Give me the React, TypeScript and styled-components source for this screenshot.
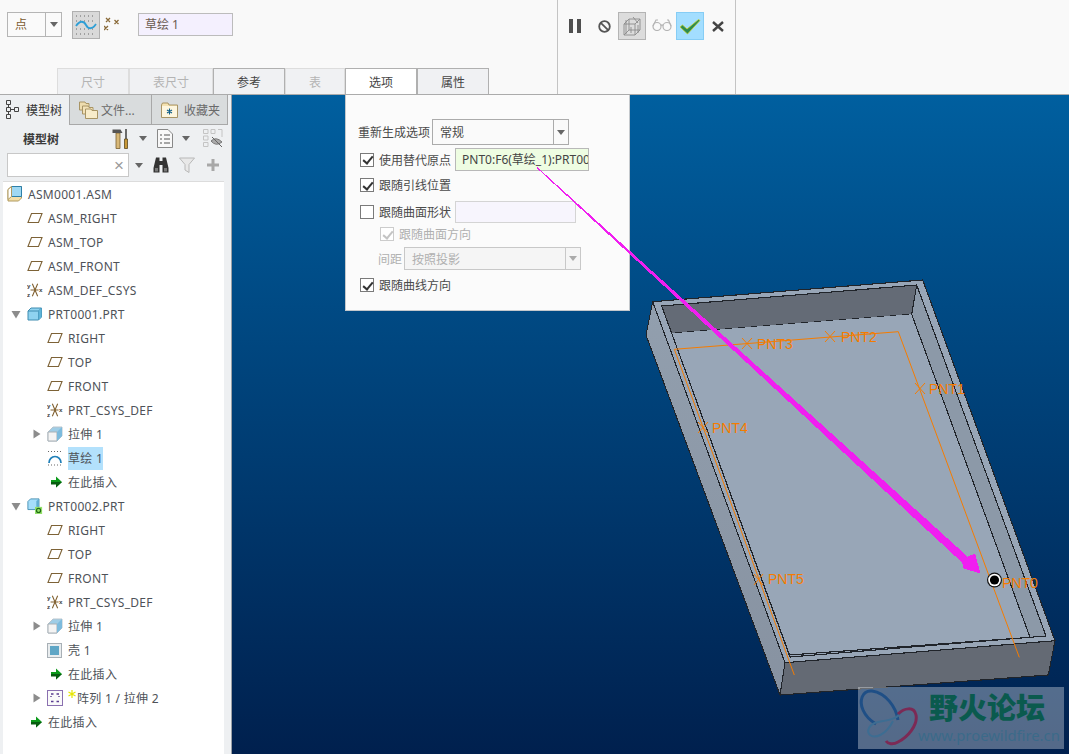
import { FunctionComponent } from "react";
import styled, { createGlobalStyle } from "styled-components";

const FONT = `"Noto Sans", "Noto Sans CJK SC", sans-serif`;

type IconKind =
  | "asm"
  | "plane"
  | "csys"
  | "part"
  | "partNew"
  | "extrude"
  | "sketch"
  | "insert"
  | "shell"
  | "pattern";

interface TreeNode {
  label: string;
  icon: IconKind;
  depth: number;
  caret?: "down" | "right";
  selected?: boolean;
  star?: boolean;
}

const treeData: TreeNode[] = [
  { label: "ASM0001.ASM", icon: "asm", depth: 0 },
  { label: "ASM_RIGHT", icon: "plane", depth: 1 },
  { label: "ASM_TOP", icon: "plane", depth: 1 },
  { label: "ASM_FRONT", icon: "plane", depth: 1 },
  { label: "ASM_DEF_CSYS", icon: "csys", depth: 1 },
  { label: "PRT0001.PRT", icon: "part", depth: 1, caret: "down" },
  { label: "RIGHT", icon: "plane", depth: 2 },
  { label: "TOP", icon: "plane", depth: 2 },
  { label: "FRONT", icon: "plane", depth: 2 },
  { label: "PRT_CSYS_DEF", icon: "csys", depth: 2 },
  { label: "拉伸 1", icon: "extrude", depth: 2, caret: "right" },
  { label: "草绘 1", icon: "sketch", depth: 2, selected: true },
  { label: "在此插入", icon: "insert", depth: 2 },
  { label: "PRT0002.PRT", icon: "partNew", depth: 1, caret: "down" },
  { label: "RIGHT", icon: "plane", depth: 2 },
  { label: "TOP", icon: "plane", depth: 2 },
  { label: "FRONT", icon: "plane", depth: 2 },
  { label: "PRT_CSYS_DEF", icon: "csys", depth: 2 },
  { label: "拉伸 1", icon: "extrude", depth: 2, caret: "right" },
  { label: "壳 1", icon: "shell", depth: 2 },
  { label: "在此插入", icon: "insert", depth: 2 },
  { label: "阵列 1 / 拉伸 2", icon: "pattern", depth: 2, caret: "right", star: true },
  { label: "在此插入", icon: "insert", depth: 1 },
];

const dashTabs = [
  { label: "尺寸", width: 72, disabled: true },
  { label: "表尺寸", width: 84, disabled: true },
  { label: "参考", width: 72 },
  { label: "表", width: 60, disabled: true },
  { label: "选项", width: 72, active: true },
  { label: "属性", width: 72 },
];

const TreeIcon: FunctionComponent<{ kind: IconKind }> = ({ kind }) => {
  switch (kind) {
    case "asm":
      return (
        <svg width="16" height="18" viewBox="0 0 16 18">
          <path d="M1 4.5 L4.5 1.5 H14.5 V13 L11.5 16 H1 Z" fill="#f3dfa8" stroke="#b09a60" />
          <path d="M4.5 1.5 H14.5 V11.5 H4.5 Z" fill="#9fd8f2" stroke="#2d7fa8" />
          <path d="M1 4.5 L4.5 1.5 V11.5 L1 14.5 Z" fill="#ffffff" stroke="#b09a60" />
        </svg>
      );
    case "plane":
      return (
        <svg width="16" height="12" viewBox="0 0 16 12">
          <path d="M4.5 1.5 H15 L11.5 10.5 H1 Z" fill="none" stroke="#7d6236" strokeWidth="1.1" />
        </svg>
      );
    case "csys":
      return (
        <svg width="18" height="18" viewBox="0 0 18 18">
          <path d="M6 2 L12 16 M12 2 L6 16 M9 9 L4 9 M9 9 L13 9" stroke="#80602f" strokeWidth="1.2" fill="none" />
          <text x="0" y="6.5" fontSize="7" fontWeight="700" fill="#3c3c3c" fontFamily="Liberation Sans">y</text>
          <text x="0" y="17" fontSize="7" fontWeight="700" fill="#3c3c3c" fontFamily="Liberation Sans">z</text>
          <text x="13.5" y="11.5" fontSize="7" fontWeight="700" fill="#3c3c3c" fontFamily="Liberation Sans">x</text>
        </svg>
      );
    case "part":
      return (
        <svg width="16" height="14" viewBox="0 0 16 14">
          <path d="M1 4 L4 1 H14.5 V10 L11.5 13 H1 Z" fill="#8fd3f0" stroke="#3f8cb0" />
          <path d="M1 4 H11.5 L14.5 1 M11.5 4 V13" fill="none" stroke="#3f8cb0" />
          <path d="M11.5 4 L14.5 1 V10 L11.5 13 Z" fill="#5fb4d8" />
        </svg>
      );
    case "partNew":
      return (
        <svg width="18" height="18" viewBox="0 0 18 18">
          <path d="M1 4 L4 1 H13.5 V11 L10.5 13 H1 Z" fill="#a6defa" stroke="#3f8cb0" />
          <path d="M10.5 3.5 L13.5 1 V11 L10.5 13 Z" fill="#62aed2" />
          <rect x="9" y="10" width="8" height="8" fill="#93e06a" />
          <circle cx="13" cy="14" r="2.3" fill="none" stroke="#226a14" strokeWidth="1.3" />
        </svg>
      );
    case "extrude":
      return (
        <svg width="16" height="16" viewBox="0 0 16 16">
          <path d="M1 6 L6 1 H15 V10 L10 15 H1 Z" fill="#9fcde6" stroke="#b8c4cc" />
          <path d="M1 6 H10 V15 H1 Z" fill="#f4f4f4" stroke="#a8b0b6" />
          <path d="M10 6 L15 1 V10 L10 15 Z" fill="#7dbbdd" />
        </svg>
      );
    case "sketch":
      return (
        <svg width="16" height="16" viewBox="0 0 16 16">
          <path d="M2 13 A6 6.5 0 0 1 14 13" fill="none" stroke="#1f7fb8" strokeWidth="1.7" />
          <path d="M1 1.5 H15 M1 15 H15" stroke="#666" strokeDasharray="1 2" fill="none" />
        </svg>
      );
    case "insert":
      return (
        <svg width="16" height="14" viewBox="0 0 16 14">
          <path d="M4 5 H9 V1.5 L15 7 L9 12.5 V9 H4 Z" fill="#0c9a1a" />
          <path d="M4 7 H15 L9 12.5 V9.5 H4 Z" fill="#075c10" />
        </svg>
      );
    case "shell":
      return (
        <svg width="16" height="16" viewBox="0 0 16 16">
          <rect x="0.5" y="1.5" width="14" height="14" fill="#e9edef" stroke="#a8b0b6" />
          <rect x="3" y="4" width="9" height="9" fill="#5fa6c6" />
        </svg>
      );
    case "pattern":
      return (
        <svg width="16" height="16" viewBox="0 0 16 16">
          <rect x="0.5" y="0.5" width="15" height="15" fill="#fafafa" stroke="#8a70b0" />
          <path d="M4 4 H6.5 M9.5 4 H12 M4 11.5 H6.5 M9.5 11.5 H12 M4 6 V7 M12 6 V7" stroke="#5a3c90" strokeWidth="1.4" />
        </svg>
      );
  }
};

const Caret: FunctionComponent<{ dir: "down" | "right" }> = ({ dir }) => (
  <CaretBox>
    <svg width="10" height="10" viewBox="0 0 10 10">
      {dir === "down" ? (
        <path d="M0.5 2 H9.5 L5 9.5 Z" fill="#8c8c8c" />
      ) : (
        <path d="M2.5 0.5 L9.5 5 L2.5 9.5 Z" fill="#8c8c8c" />
      )}
    </svg>
  </CaretBox>
);

const SmallDrop = ({ color = "#666" }: { color?: string }) => (
  <svg width="8" height="5" viewBox="0 0 8 5">
    <path d="M0 0 H8 L4 5 Z" fill={color} />
  </svg>
);

const FolderIcon = ({ star }: { star?: boolean }) =>
  star ? (
    <svg width="17" height="16" viewBox="0 0 17 16">
      <path d="M0.5 3 L1.5 1 H7 L8 3 H16.5 V15.5 H0.5 Z" fill="#f5e2b0" stroke="#a89464" />
      <rect x="1" y="4" width="15" height="11" fill="#fdf6df" />
      <path d="M8.5 6.5 V12.5 M6 8 L11 11 M11 8 L6 11" stroke="#0f5f8a" strokeWidth="1.1" />
    </svg>
  ) : (
    <svg width="20" height="19" viewBox="0 0 20 19">
      <path d="M0.5 2 H6 L7 3.5 H10 V10 H0.5 Z" fill="#eedcae" stroke="#a89464" />
      <path d="M3.5 6 H9 L10 7.5 H14 V14 H3.5 Z" fill="#f3e2b8" stroke="#a89464" />
      <path d="M6.5 9 H12 L13 10.5 H18.5 V18.5 H6.5 Z" fill="#f8ecca" stroke="#a89464" />
    </svg>
  );

const App: FunctionComponent = () => {
  return (
    <>
      <GlobalStyle />
      <Page>
        <Ribbon>
          <DashLeft>
            <ControlRow>
              <DropSelect>
                <DropValue>点</DropValue>
                <DropButton>
                  <SmallDrop />
                </DropButton>
              </DropSelect>
              <ToggleButton>
                <svg width="24" height="24" viewBox="0 0 24 24">
                  <path d="M2 3 H22 M2 8 H22 M2 16 H22 M2 21 H22" stroke="#666" strokeDasharray="1 3" fill="none" />
                  <path d="M2 13 C6 7 10 8 12 12 C14 16 18 17 22 11" stroke="#2f9fd6" strokeWidth="1.8" fill="none" />
                </svg>
              </ToggleButton>
              <PointsIcon>
                <svg width="16" height="16" viewBox="0 0 16 16" fill="none" stroke="#8a6a38" strokeWidth="1.3">
                  <path d="M2 1 L6 5 M6 1 L2 5 M10.5 3 L14.5 7 M14.5 3 L10.5 7 M0 9 L4 13 M4 9 L0 13" />
                </svg>
              </PointsIcon>
              <NameField>草绘 1</NameField>
            </ControlRow>
            <DashTabs>
              {dashTabs.map((t) => (
                <DashTab key={t.label} $width={t.width} $active={t.active} $disabled={t.disabled}>
                  {t.label}
                </DashTab>
              ))}
            </DashTabs>
          </DashLeft>
          <DashRight>
            <svg width="12" height="14" viewBox="0 0 12 14">
              <path d="M0 0 H4 V14 H0 Z M8 0 H12 V14 H8 Z" fill="#4f4f4f" />
            </svg>
            <StopIcon>
              <svg width="13" height="13" viewBox="0 0 13 13" fill="none" stroke="#555" strokeWidth="1.8">
                <circle cx="6.5" cy="6.5" r="5.3" />
                <path d="M2.8 2.8 L10.2 10.2" />
              </svg>
            </StopIcon>
            <ActionButton>
              <svg width="20" height="20" viewBox="0 0 20 20" fill="none" stroke="#8a8a8a" strokeWidth="0.9">
                <path d="M2 8 L7 3 H18 V14 L13 19 H2 Z M2 8 H13 L18 3 M13 8 V19 M7 3 V14 M2 19 L7 14 H18 M4 4 V18 M11 1 L16 7 M9 11 V17 M16 9 V17" />
              </svg>
            </ActionButton>
            <GlassesIcon>
              <svg width="20" height="12" viewBox="0 0 20 12" fill="none" stroke="#b4b4b4" strokeWidth="1.2">
                <circle cx="5" cy="7.5" r="4" />
                <circle cx="15" cy="7.5" r="4" />
                <path d="M9 6.5 Q10 5.5 11 6.5 M1 7 L4 1 H6 M19 7 L16.5 1 H15" />
              </svg>
            </GlassesIcon>
            <ConfirmButton>
              <svg width="22" height="17" viewBox="0 0 22 17">
                <path d="M1 9 L3.5 7 L8 11 L19.5 1.5 L21 2.5 L8.5 16 Z" fill="#2d8b4e" stroke="#c7cf2e" strokeWidth="0.8" />
              </svg>
            </ConfirmButton>
            <CancelIcon>
              <svg width="12" height="11" viewBox="0 0 12 11" fill="none" stroke="#444" strokeWidth="2.4">
                <path d="M1 1 L11 10 M11 1 L1 10" />
              </svg>
            </CancelIcon>
          </DashRight>
        </Ribbon>
        <Body>
          <Sidebar>
            <SideTabs>
              <SideTab $width={70} $active $pad={6} $gap={7}>
                <svg width="13" height="20" viewBox="0 0 13 20" fill="none" stroke="#444">
                  <path d="M0.5 0.5 H4.5 V4.5 H0.5 Z M0.5 7.5 H4.5 V11.5 H0.5 Z M0.5 14.5 H4.5 V18.5 H0.5 Z M8.5 7.5 H12.5 V11.5 H8.5 Z M4.5 9.5 H8.5 M2.5 4.5 V7.5 M2.5 11.5 V14.5" />
                </svg>
                模型树
              </SideTab>
              <SideTab $width={82} $pad={9} $gap={2}>
                <FolderIcon />
                文件...
              </SideTab>
              <SideTab $width={76} $pad={9} $gap={6}>
                <FolderIcon star />
                收藏夹
              </SideTab>
            </SideTabs>
            <ToolRow>
              <ToolTitle>模型树</ToolTitle>
              <svg width="17" height="20" viewBox="0 0 17 20">
                <path d="M4 4 H8 V19.5 H4 Z" fill="#d8b878" stroke="#7a6030" strokeWidth="0.8" />
                <path d="M0.5 0.5 H8.5 L10.5 4 H0.5 Z" fill="#555" />
                <path d="M14 0 V10" stroke="#333" strokeWidth="1.4" />
                <path d="M12.5 10 H15.5 V19.5 H12.5 Z" fill="#c89838" stroke="#5c4a20" strokeWidth="0.8" />
              </svg>
              <DropSlot $left={10}>
                <SmallDrop />
              </DropSlot>
              <DocIcon>
                <svg width="16" height="19" viewBox="0 0 16 19">
                  <path d="M0.5 0.5 H11 L15.5 5 V18.5 H0.5 Z" fill="#f8f8f8" stroke="#888" />
                  <path d="M3 6 H5 M7 6 H13 M3 10 H5 M7 10 H13 M3 14 H5 M7 14 H13" stroke="#555" />
                </svg>
              </DocIcon>
              <DropSlot $left={9}>
                <SmallDrop />
              </DropSlot>
              <EyeIcon>
                <svg width="20" height="19" viewBox="0 0 20 19" fill="none" stroke="#c4c4c4">
                  <path d="M0.5 0.5 H5 V4.5 H0.5 Z M0.5 7 H5 V11 H0.5 Z M0.5 13.5 H5 V17.5 H0.5 Z M8 0.5 H12 V4.5 H8 Z M15 0.5 H19 M19 0.5 V8" />
                  <path d="M8 12 Q13 7 19 13 Q13 18 8 12 Z" fill="#aaa" stroke="#777" />
                  <path d="M9 8 L19 18" stroke="#666" />
                </svg>
              </EyeIcon>
            </ToolRow>
            <SearchRow>
              <SearchBox>
                <ClearX>×</ClearX>
              </SearchBox>
              <DropSlot $left={6}>
                <SmallDrop />
              </DropSlot>
              <SearchIcons>
                <svg width="16" height="16" viewBox="0 0 16 16">
                  <path d="M3 0.5 H6.5 V4 H9.5 V0.5 H13 L15.5 11 V15.5 H9.5 V8 H6.5 V15.5 H0.5 V11 Z" fill="#333" />
                  <path d="M2 11 H5 V14.5 H2 Z M11 11 H14 V14.5 H11 Z" fill="#777" />
                </svg>
                <svg width="16" height="16" viewBox="0 0 16 16">
                  <path d="M0.5 1 H15.5 L10 7.5 V15.5 L6 13 V7.5 Z" fill="#e8e8e8" stroke="#b8b8b8" />
                </svg>
                <svg width="12" height="12" viewBox="0 0 12 12">
                  <path d="M4.5 0 H7.5 V4.5 H12 V7.5 H7.5 V12 H4.5 V7.5 H0 V4.5 H4.5 Z" fill="#a8a8a8" />
                </svg>
              </SearchIcons>
            </SearchRow>
            <Tree>
              {treeData.map((node, i) => (
                <TreeRow key={i} $depth={node.depth}>
                  {node.caret ? <Caret dir={node.caret} /> : null}
                  <IconSlot>
                    <TreeIcon kind={node.icon} />
                  </IconSlot>
                  {node.star ? (
                    <StarMark width="8" height="8" viewBox="0 0 8 8" stroke="#e6e600" strokeWidth="1.2">
                      <path d="M4 0 V8 M0.5 2 L7.5 6 M7.5 2 L0.5 6" />
                    </StarMark>
                  ) : null}
                  <TreeLabel $selected={node.selected}>{node.label}</TreeLabel>
                </TreeRow>
              ))}
            </Tree>
          </Sidebar>
          <Viewport>
            <ModelLayer viewBox="232 95 837 659">
              <defs>
                <linearGradient id="leftFace" x1="0" y1="0" x2="0" y2="1">
                  <stop offset="0" stopColor="#929fae" />
                  <stop offset="1" stopColor="#8792a1" />
                </linearGradient>
              </defs>
              <g stroke="#20242a" strokeWidth="1.1" strokeLinejoin="round" shapeRendering="crispEdges">
                <polygon points="646,335 652.7,301.7 785,662.7 780,695" fill="url(#leftFace)" />
                <polygon points="785,662.7 1055,640.7 1048.3,675 780,695" fill="#646a74" />
                <polygon points="652.7,301.7 922.7,280 1055,640.7 785,662.7" fill="#98a6b7" />
                <polygon points="661.7,306 916.7,285 1046,636 790,657" fill="#98a6b7" />
                <polygon points="661.7,306 916.7,285 911.7,314.3 671.7,333.3" fill="#646b76" />
                <polygon points="916.7,285 911.7,314.3 1030,637.3 1046,636" fill="#8c99a8" />
                <polygon points="671.7,333.3 911.7,314.3 1030,637.3 789.5,655" fill="#98a6b7" stroke="none" />
                <path d="M671.7 333.3 L789.5 655 L1030 637.3 L911.7 314.3" fill="none" />
              </g>
              <g fill="none" stroke="#f57c00" strokeWidth="1">
                <polyline points="794.3,675 674.3,349.3 898.3,331.7 1019.3,657.3" />
                <path d="M742 338 L752 349 M752 338 L742 349" />
                <path d="M825 331 L835 342 M835 331 L825 342" />
                <path d="M915 383 L925 394 M925 383 L915 394" />
                <path d="M698 422 L708 433 M708 422 L698 433" />
                <path d="M754 574 L763 585 M763 574 L754 585" />
              </g>
              <g fill="#f57c00" fontFamily="Liberation Sans" fontSize="14">
                <text x="757" y="349">PNT3</text>
                <text x="841" y="342">PNT2</text>
                <text x="929" y="394">PNT1</text>
                <text x="712" y="433">PNT4</text>
                <text x="768" y="584">PNT5</text>
                <text x="1002" y="588">PNT0</text>
              </g>
              <circle cx="994.5" cy="580" r="7.5" fill="#111" />
              <circle cx="994.5" cy="580" r="6.3" fill="#fff" />
              <circle cx="994.5" cy="580" r="4.6" fill="#000" />
            </ModelLayer>
            <OptionsPanel>
              <PanelRow $mt={24} $h={26}>
                <PanelLabel>重新生成选项</PanelLabel>
                <PanelSelect $width={137} $ml={2}>
                  <SelectValue>常规</SelectValue>
                  <SelectDrop>
                    <SmallDrop />
                  </SelectDrop>
                </PanelSelect>
              </PanelRow>
              <PanelRow $mt={3} $h={23}>
                <CheckBox $checked />
                <CheckLabel>使用替代原点</CheckLabel>
                <GreenField>PNT0:F6(草绘_1):PRT0002.PRT</GreenField>
              </PanelRow>
              <PanelRow $mt={2} $h={24}>
                <CheckBox $checked />
                <CheckLabel>跟随引线位置</CheckLabel>
              </PanelRow>
              <PanelRow $mt={3} $h={23}>
                <CheckBox />
                <CheckLabel>跟随曲面形状</CheckLabel>
                <EmptyField />
              </PanelRow>
              <PanelRow $mt={1} $h={20} $indent={20}>
                <CheckBox $checked $disabled />
                <CheckLabel $disabled>跟随曲面方向</CheckLabel>
              </PanelRow>
              <PanelRow $mt={3} $h={23} $indent={20}>
                <PanelLabel $disabled>间距</PanelLabel>
                <PanelSelect $width={177} $ml={2} $disabled>
                  <SelectValue $disabled>按照投影</SelectValue>
                  <SelectDrop $disabled>
                    <SmallDrop color="#aaa" />
                  </SelectDrop>
                </PanelSelect>
              </PanelRow>
              <PanelRow $mt={3} $h={24}>
                <CheckBox $checked />
                <CheckLabel>跟随曲线方向</CheckLabel>
              </PanelRow>
            </OptionsPanel>
            <ArrowLayer viewBox="232 95 837 659">
              <polygon
                points="537.6,167.4 967.5,556.5 975,553.5 980.5,573.5 963.5,568.5 962,562.5 536.9,168.1"
                fill="#f01ff0"
                shapeRendering="crispEdges"
              />
            </ArrowLayer>
            <Watermark>
              <svg width="60" height="62" viewBox="0 0 60 62" fill="none">
                <path d="M40 33 C38 20 28 6 14 4 C4 3 1 14 5 23 C8 30 13 34 18 37" stroke="#1f4f86" strokeWidth="3" />
                <path d="M43 25 C40 32 30 33 20 35 C11 37 8 44 12 48 C17 52 28 48 35 34" stroke="#3d6d92" strokeWidth="2" />
                <path d="M40 27 C46 21 56 19 58 28 C60 38 50 50 40 55 C35 58 30 57 28 54" stroke="#7c2a55" strokeWidth="3" />
              </svg>
              <WatermarkText>
                <WatermarkTitle>野火论坛</WatermarkTitle>
                <WatermarkUrl>www.proewildfire.cn</WatermarkUrl>
              </WatermarkText>
            </Watermark>
          </Viewport>
        </Body>
      </Page>
    </>
  );
};

export default App;

// styled-components
const GlobalStyle = createGlobalStyle`
  html, body {
    margin: 0;
    padding: 0;
    overflow: hidden;
    background: #f9f9f9;
  }
`;

const Page = styled.div`
  width: 1069px;
  height: 754px;
  display: flex;
  flex-direction: column;
  font-family: ${FONT};
  font-size: 12px;
  color: #4a4a4a;
  overflow: hidden;
`;

const Ribbon = styled.div`
  height: 95px;
  box-sizing: border-box;
  display: flex;
  background: #f9f9f9;
  border-bottom: 1px solid #ababab;
`;

const DashLeft = styled.div`
  width: 558px;
  box-sizing: border-box;
  display: flex;
  flex-direction: column;
  justify-content: space-between;
  border-right: 1px solid #c4c4c4;
`;

const ControlRow = styled.div`
  display: flex;
  align-items: flex-start;
  padding: 11px 0 0 7px;
`;

const DropSelect = styled.div`
  width: 55px;
  height: 25px;
  margin-top: 1px;
  box-sizing: border-box;
  display: flex;
  border: 1px solid #b5b5b5;
  background: #fafafa;
`;

const DropValue = styled.span`
  flex: 1;
  padding-left: 7px;
  line-height: 23px;
  color: #7a5a30;
`;

const DropButton = styled.span`
  width: 15px;
  display: flex;
  align-items: center;
  justify-content: center;
  border-left: 1px solid #b5b5b5;
`;

const ToggleButton = styled.div`
  width: 28px;
  height: 28px;
  margin-left: 10px;
  box-sizing: border-box;
  display: flex;
  align-items: center;
  justify-content: center;
  background: #d9d9d9;
  border: 1px solid #b0b0b0;
`;

const PointsIcon = styled.span`
  display: flex;
  margin: 6px 0 0 4px;
`;

const NameField = styled.div`
  width: 95px;
  height: 23px;
  margin: 2px 0 0 18px;
  padding-left: 6px;
  box-sizing: border-box;
  line-height: 21px;
  background: #f4f0fe;
  border: 1px solid #bcbcbc;
  color: #6a5a50;
`;

const DashTabs = styled.div`
  display: flex;
  padding-left: 57px;
`;

const DashTab = styled.div<{ $width: number; $active?: boolean; $disabled?: boolean }>`
  width: ${(p) => p.$width}px;
  height: 26px;
  box-sizing: border-box;
  display: flex;
  align-items: center;
  justify-content: center;
  background: ${(p) => (p.$active ? "#ffffff" : "#f0f1f3")};
  border: 1px solid ${(p) => (p.$disabled ? "#dddddd" : "#b0b0b0")};
  border-bottom: none;
  color: ${(p) => (p.$disabled ? "#b4b4b4" : "#444")};
`;

const DashRight = styled.div`
  width: 178px;
  box-sizing: border-box;
  display: flex;
  align-items: flex-start;
  padding: 12px 0 0 11px;
  border-right: 1px solid #c4c4c4;

  > svg {
    margin-top: 7px;
  }
`;

const StopIcon = styled.span`
  display: flex;
  margin: 8px 0 0 17px;
`;

const ActionButton = styled.div`
  width: 28px;
  height: 28px;
  margin-left: 7px;
  box-sizing: border-box;
  display: flex;
  align-items: center;
  justify-content: center;
  background: #dcdcdc;
  border: 1px solid #b4b4b4;
`;

const GlassesIcon = styled.span`
  display: flex;
  margin: 7px 0 0 6px;
`;

const ConfirmButton = styled.div`
  width: 28px;
  height: 28px;
  margin-left: 4px;
  box-sizing: border-box;
  display: flex;
  align-items: center;
  justify-content: center;
  background: #a3deff;
  border: 1px solid #86cdf5;
`;

const CancelIcon = styled.span`
  display: flex;
  margin: 9px 0 0 8px;
`;

const Body = styled.div`
  flex: 1;
  min-height: 0;
  display: flex;
`;

const Sidebar = styled.div`
  width: 232px;
  box-sizing: border-box;
  display: flex;
  flex-direction: column;
  background: #eef0f2;
  border-right: 1px solid #9aa0a6;
`;

const SideTabs = styled.div`
  height: 30px;
  flex: none;
  display: flex;
`;

const SideTab = styled.div<{ $width: number; $active?: boolean; $pad: number; $gap: number }>`
  width: ${(p) => p.$width}px;
  box-sizing: border-box;
  display: flex;
  align-items: center;
  gap: ${(p) => p.$gap}px;
  padding-left: ${(p) => p.$pad}px;
  background: ${(p) => (p.$active ? "#eef0f2" : "#d9dcdd")};
  border-right: 1px solid #a8a8a8;
  border-bottom: ${(p) => (p.$active ? "none" : "1px solid #a8a8a8")};
  color: ${(p) => (p.$active ? "#333" : "#6a6a6a")};
`;

const ToolRow = styled.div`
  height: 27px;
  flex: none;
  display: flex;
  align-items: center;
  padding-left: 23px;
`;

const ToolTitle = styled.span`
  width: 89px;
  font-weight: 700;
  color: #3a3a3a;
`;

const DropSlot = styled.span<{ $left: number }>`
  display: flex;
  margin-left: ${(p) => p.$left}px;
`;

const DocIcon = styled.span`
  display: flex;
  margin-left: 10px;
`;

const EyeIcon = styled.span`
  display: flex;
  margin-left: 13px;
`;

const SearchRow = styled.div`
  height: 24px;
  flex: none;
  display: flex;
  align-items: center;
  padding: 1px 0 0 7px;
`;

const SearchBox = styled.div`
  width: 122px;
  height: 24px;
  box-sizing: border-box;
  display: flex;
  align-items: center;
  justify-content: flex-end;
  padding-right: 4px;
  background: #ffffff;
  border: 1px solid #c8c8c8;
`;

const ClearX = styled.span`
  font-family: "Liberation Sans", sans-serif;
  font-size: 17px;
  line-height: 1;
  color: #9a9a9a;
`;

const SearchIcons = styled.div`
  display: flex;
  align-items: center;
  gap: 10px;
  margin-left: 10px;

  svg:last-child {
    margin-left: 2px;
  }
`;

const Tree = styled.div`
  flex: 1;
  min-height: 0;
  margin: 4px 7px 0 3px;
  background: #ffffff;
  border-top: 1px solid #dcdcdc;
`;

const TreeRow = styled.div<{ $depth: number }>`
  height: 24px;
  display: flex;
  align-items: center;
  padding-left: ${(p) => 4 + p.$depth * 20}px;
`;

const CaretBox = styled.span`
  display: flex;
  width: 10px;
  margin-left: -16px;
  margin-right: 6px;
`;

const IconSlot = styled.span`
  width: 16px;
  margin-right: 5px;
  display: flex;
  align-items: center;
  justify-content: flex-start;
  flex: none;
`;

const StarMark = styled.svg`
  flex: none;
  margin: -8px 1px 0 0;
`;

const TreeLabel = styled.span<{ $selected?: boolean }>`
  height: 23px;
  line-height: 23px;
  letter-spacing: 0.3px;
  white-space: nowrap;
  background: ${(p) => (p.$selected ? "#b3e1fc" : "transparent")};
  color: #4e5258;
`;

const Viewport = styled.div`
  flex: 1;
  position: relative;
  background: linear-gradient(180deg, #005f9f 0%, #004a84 32%, #00204e 100%);
`;

const ModelLayer = styled.svg`
  position: absolute;
  inset: 0;
  width: 837px;
  height: 659px;
`;

const ArrowLayer = styled(ModelLayer)`
  pointer-events: none;
`;

const OptionsPanel = styled.div`
  position: absolute;
  left: 113px;
  top: 0;
  width: 285px;
  height: 216px;
  box-sizing: border-box;
  padding: 0 12px;
  display: flex;
  flex-direction: column;
  background: #fbfbfb;
  border: 1px solid #c4c8cc;
  border-top: none;
`;

const PanelRow = styled.div<{ $mt: number; $h: number; $indent?: number }>`
  flex: none;
  display: flex;
  align-items: center;
  height: ${(p) => p.$h}px;
  margin-top: ${(p) => p.$mt}px;
  padding-left: ${(p) => p.$indent ?? 0}px;
`;

const PanelLabel = styled.span<{ $disabled?: boolean }>`
  white-space: nowrap;
  color: ${(p) => (p.$disabled ? "#b0b0b0" : "#4a4a4a")};
`;

const PanelSelect = styled.div<{ $width: number; $ml: number; $disabled?: boolean }>`
  width: ${(p) => p.$width}px;
  height: 100%;
  margin-left: ${(p) => p.$ml}px;
  box-sizing: border-box;
  display: flex;
  align-items: stretch;
  background: ${(p) => (p.$disabled ? "#f5f5f5" : "#fafafa")};
  border: 1px solid ${(p) => (p.$disabled ? "#c8c8c8" : "#ababab")};
`;

const SelectValue = styled.span<{ $disabled?: boolean }>`
  flex: 1;
  display: flex;
  align-items: center;
  padding-left: 7px;
  color: ${(p) => (p.$disabled ? "#b0b0b0" : "#4a4a4a")};
`;

const SelectDrop = styled.span<{ $disabled?: boolean }>`
  width: 14px;
  display: flex;
  align-items: center;
  justify-content: center;
  border-left: 1px solid ${(p) => (p.$disabled ? "#c8c8c8" : "#ababab")};
`;

const CheckBox = styled.span<{ $checked?: boolean; $disabled?: boolean }>`
  width: 12px;
  height: 12px;
  margin-left: 2px;
  flex: none;
  position: relative;
  background: #ffffff;
  border: 1px solid ${(p) => (p.$disabled ? "#cccccc" : "#7a7a7a")};

  &::after {
    content: "";
    display: ${(p) => (p.$checked ? "block" : "none")};
    position: absolute;
    left: 3.5px;
    top: 0.5px;
    width: 4px;
    height: 8px;
    border: solid ${(p) => (p.$disabled ? "#c4c4c4" : "#333333")};
    border-width: 0 2px 2px 0;
    transform: rotate(40deg);
  }
`;

const CheckLabel = styled.span<{ $disabled?: boolean }>`
  margin-left: 5px;
  white-space: nowrap;
  color: ${(p) => (p.$disabled ? "#b0b0b0" : "#4a4a4a")};
`;

const GreenField = styled.div`
  width: 134px;
  height: 23px;
  margin-left: 4px;
  padding-left: 6px;
  box-sizing: border-box;
  overflow: hidden;
  white-space: nowrap;
  line-height: 21px;
  background: #eefde2;
  border: 1px solid #b8b8b8;
  color: #444;
`;

const EmptyField = styled.div`
  width: 121px;
  height: 22px;
  margin-left: 4px;
  box-sizing: border-box;
  background: #f7f5fd;
  border: 1px solid #d4d4d4;
`;

const Watermark = styled.div`
  position: absolute;
  right: 5px;
  bottom: 5px;
  width: 206px;
  height: 62px;
  display: flex;
  background: rgba(255, 255, 255, 0.33);
`;

const WatermarkText = styled.div`
  display: flex;
  flex-direction: column;
  flex: 1;
  padding-top: 4px;
`;

const WatermarkTitle = styled.div`
  font-size: 29px;
  font-weight: 900;
  line-height: 34px;
  margin-left: 11px;
  color: #0a5a4e;
  white-space: nowrap;
`;

const WatermarkUrl = styled.div`
  font-size: 14.8px;
  line-height: 20px;
  color: #3b6a89;
  white-space: nowrap;
`;
